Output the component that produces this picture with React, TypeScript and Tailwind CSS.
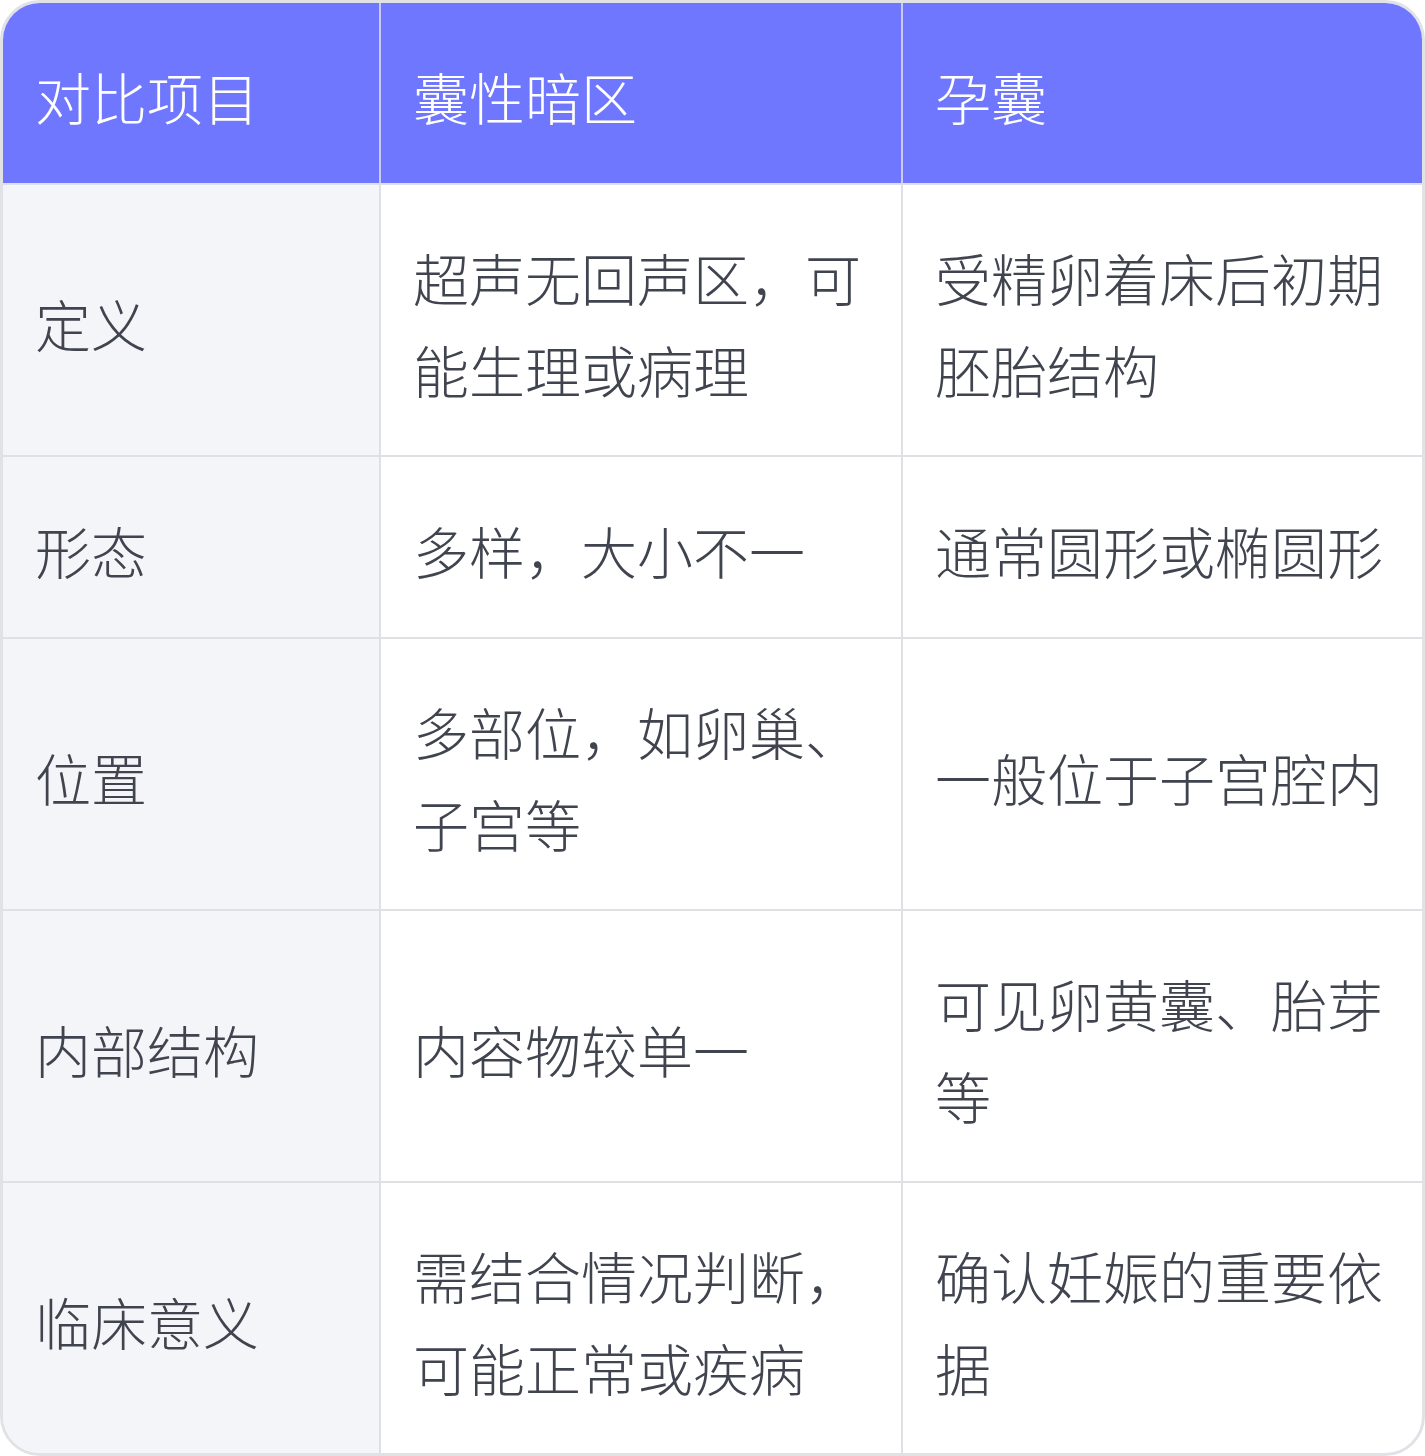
const rows: [string, string, string][] = [
  ["定义", "超声无回声区，可能生理或病理", "受精卵着床后初期胚胎结构"],
  ["形态", "多样，大小不一", "通常圆形或椭圆形"],
  ["位置", "多部位，如卵巢、子宫等", "一般位于子宫腔内"],
  ["内部结构", "内容物较单一", "可见卵黄囊、胎芽等"],
  ["临床意义", "需结合情况判断，可能正常或疾病", "确认妊娠的重要依据"],
];

const cell = "px-[32px] pt-[46px] pb-[40px] min-h-[180px] flex items-center";

export default function App() {
  return (
    <div
      className="w-[1425px] bg-white"
      style={{ fontFamily: '"Noto Sans CJK SC", "Noto Sans", sans-serif' }}
    >
      <div className="border-[3px] border-[#e1e2e6] rounded-[40px] overflow-hidden text-[56px] leading-[92px] font-light">
        {/* header */}
        <div className="grid grid-cols-[376px_522px_521px] bg-[#7077ff] text-white">
          <div className="px-[32px] pt-[47px] pb-[41px]">对比项目</div>
          <div className="px-[32px] pt-[47px] pb-[41px] border-l-2 border-[#c9cbf6]">囊性暗区</div>
          <div className="px-[32px] pt-[47px] pb-[41px] border-l-2 border-[#c9cbf6]">孕囊</div>
        </div>

        {rows.map(([item, cyst, sac]) => (
          <div
            key={item}
            className="grid grid-cols-[376px_522px_521px] border-t-2 border-[#dfe0e4] text-[#40444f]"
          >
            <div className={`${cell} bg-[#f4f5f9]`}>{item}</div>
            <div className={`${cell} border-l-2 border-[#dfe0e4]`}>{cyst}</div>
            <div className={`${cell} border-l-2 border-[#dfe0e4]`}>{sac}</div>
          </div>
        ))}
      </div>
    </div>
  );
}
